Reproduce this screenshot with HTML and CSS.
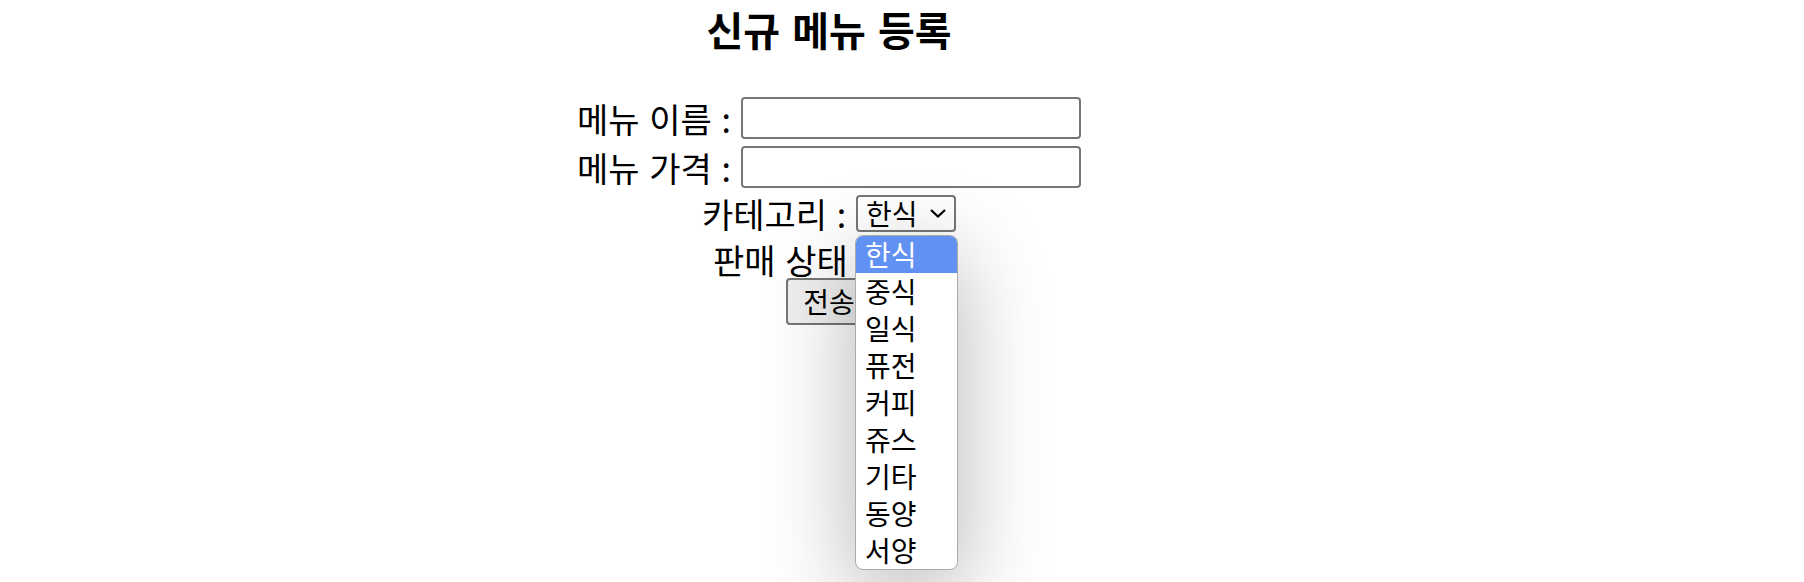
FILE: index.html
```html
<!DOCTYPE html>
<html>
<head>
  <meta charset="utf-8">
  <title>신규 메뉴 등록</title>
  <link rel="stylesheet" href="styles.css">
</head>
<body>
<div id="wrap">
  <h1 class="title">신규 메뉴 등록</h1>

  <form class="menu-form">
    <div class="row">
      <span class="label">메뉴 이름 :</span>
      <input type="text" class="text-input">
    </div>
    <div class="row">
      <span class="label">메뉴 가격 :</span>
      <input type="text" class="text-input">
    </div>
    <div class="row row-select">
      <span class="label">카테고리 :</span>
      <div class="select-box">
        <select class="select">
          <option>한식</option>
        </select>
        <svg class="chevron" width="18" height="10" viewBox="0 0 18 10">
          <path d="M2 2 L9 8.5 L16 2" fill="none" stroke="#000" stroke-width="2.2"/>
        </svg>

        <ul class="popup">
          <li class="on">한식</li>
          <li>중식</li>
          <li>일식</li>
          <li>퓨전</li>
          <li>커피</li>
          <li>쥬스</li>
          <li>기타</li>
          <li>동양</li>
          <li>서양</li>
        </ul>
      </div>
    </div>
    <div class="row row-last">
      <span class="label">판매 상태 :</span>
      <select class="select small">
        <option>판매</option>
      </select>
    </div>
    <div class="row">
      <button type="button" class="btn">전송</button>
    </div>
  </form>
</div>
</body>
</html>
```

FILE: styles.css
```css
*{
  margin: 0px;
  padding: 0px;
  list-style: none;
}
html, body{
  min-height: 582px;
}
body{
  font-family: "Noto Sans CJK KR", "Noto Sans", sans-serif;
  color: #000;
  background: #fff;
}
#wrap{ /* 가운데 기준 x=829 */
  width: 1658px;
  min-height: 582px;
  text-align: center;
}
.title{
  font-size: 40px;
  font-weight: 700;
  line-height: 42px;
  padding-top: 8px;
  word-spacing: 3px;
}
.menu-form{
  display: flex;
  flex-direction: column;
  align-items: center;
  padding-top: 47px;
}
.row{
  display: flex;
  align-items: center;
  justify-content: center;
  gap: 10px;
  margin-bottom: 7px;
}
.row-select{
  margin-bottom: 9px;
}
.row-last{
  margin-bottom: 0;
}
.label{
  font-size: 34px;
  line-height: 37px;
  word-spacing: 2px;
}
.text-input{
  width: 340px;
  height: 42px;
  border: 2px solid #767676;
  border-radius: 4px;
  font-size: 28px;
  padding: 1px 3px;
  box-sizing: border-box;
  background: #fff;
}
.select-box{
  position: relative;
}
.select{
  -webkit-appearance: none;
  appearance: none;
  width: 100px;
  height: 37px;
  border: 2px solid #767676;
  border-radius: 4px;
  background: #fff;
  font-family: inherit;
  font-size: 28px;
  color: #000;
  padding: 0 0 0 8px;
  box-sizing: border-box;
  line-height: 33px;
}
.select.small{
  width: 68px;
}
.chevron{
  position: absolute; /* 화살표는 select 위에 겹침 */
  left: 73px;
  top: 13px;
  pointer-events: none;
}
.popup{
  position: absolute; /* 펼쳐진 목록 */
  left: -1px;
  top: 40px;
  width: 101px;
  background: #fff;
  border: 1.5px solid #ababab;
  border-radius: 8px;
  overflow: hidden;
  box-shadow: 0 24px 90px rgba(0,0,0,0.3);
  text-align: left;
  z-index: 10;
}
.popup li{
  height: 37px;
  line-height: 37px;
  font-size: 28px;
  padding-left: 9px;
  color: #000;
}
.popup li.on{
  background-color: #6191f2;
  color: #fff;
}
.btn{
  width: 86px;
  height: 47px;
  border: 2px solid #767676;
  border-radius: 4px;
  background: #efefef;
  font-family: inherit;
  font-size: 28px;
  line-height: 43px;
  color: #000;
}
```
